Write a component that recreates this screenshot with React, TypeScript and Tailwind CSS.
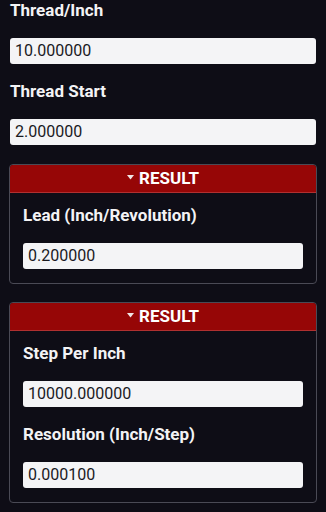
import React from "react";

const Field = ({ label, value, first }: { label: string; value: string; first?: boolean }) => (
  <div className={first ? "" : "mt-[17px]"}>
    <div className="h-5 leading-5 text-[17px] font-bold text-[#f3f3f5] mb-[18px] whitespace-nowrap">{label}</div>
    <div className="h-[26px] rounded-[3px] bg-[#f4f4f6] pl-[5px] flex items-center text-[16px] text-[#1a1a1f]">
      {value}
    </div>
  </div>
);

const ResultCard = ({ children }: { children: React.ReactNode }) => (
  <div className="rounded-[4px] border border-[#4a4a55] overflow-hidden">
    <div className="h-[28px] bg-[#960606] border-b border-[#b03030] flex items-center justify-center gap-[5px] text-white font-bold text-[17px]">
      <svg width="7" height="5" viewBox="0 0 7 5" className="mt-[-2px]">
        <path d="M0 0 L7 0 L3.5 4.5 Z" fill="#f0e6e6" />
      </svg>
      <span>RESULT</span>
    </div>
    <div className="px-[13px] pt-[12px] pb-[14px]">{children}</div>
  </div>
);

export default function App() {
  return (
    <div
      className="w-[326px] h-[512px] overflow-hidden bg-[#0e0d16] px-[9px]"
      style={{ fontFamily: "Roboto, 'Liberation Sans', sans-serif" }}
    >
      <div className="px-[1px]">
        <Field first label="Thread/Inch" value="10.000000" />
        <Field label="Thread Start" value="2.000000" />
      </div>
      <div className="mt-[19px]">
        <ResultCard>
          <Field first label="Lead (Inch/Revolution)" value="0.200000" />
        </ResultCard>
      </div>
      <div className="mt-[18px]">
        <ResultCard>
          <Field first label="Step Per Inch" value="10000.000000" />
          <Field label="Resolution (Inch/Step)" value="0.000100" />
        </ResultCard>
      </div>
    </div>
  );
}
